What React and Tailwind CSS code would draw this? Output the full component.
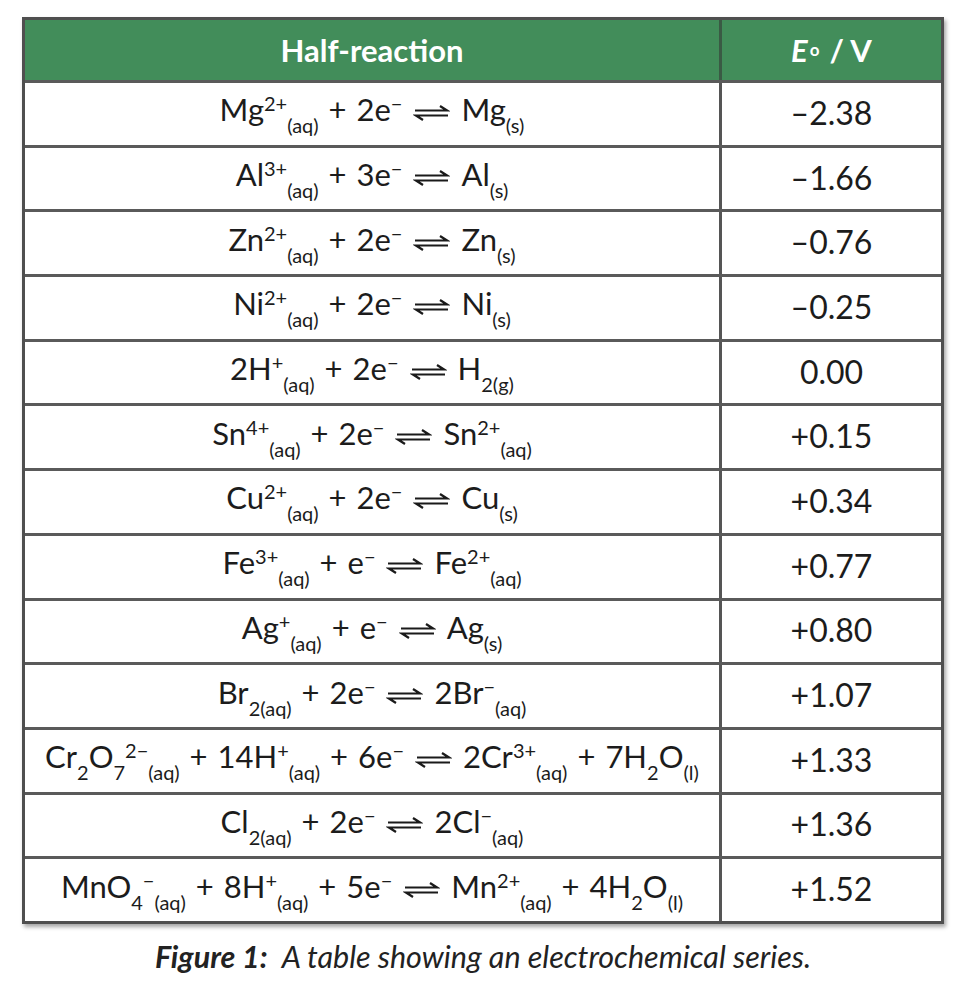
import React from "react";

const Sup = ({ children }) => (
  <span className="align-[10px] text-[20px] leading-none">{children}</span>
);
const Sub = ({ children }) => (
  <span className="align-[-12px] text-[20px] leading-none">{children}</span>
);
const Arrow = () => (
  <svg width="37" height="16" viewBox="0 0 37 16" className="mx-[11px] inline-block align-[0px]">
    <path d="M2 5.5 H34 L27 1" fill="none" stroke="#1a1a1a" strokeWidth="2.2" strokeLinejoin="miter" />
    <path d="M35 10.5 H3 L10 15" fill="none" stroke="#1a1a1a" strokeWidth="2.2" strokeLinejoin="miter" />
  </svg>
);
const P = () => <span className="mx-[10px]">+</span>;
const E = () => (
  <>
    e<Sup>−</Sup>
  </>
);

const rows = [
  [<>Mg<Sup>2+</Sup><Sub>(aq)</Sub><P />2<E /><Arrow />Mg<Sub>(s)</Sub></>, "–2.38"],
  [<>Al<Sup>3+</Sup><Sub>(aq)</Sub><P />3<E /><Arrow />Al<Sub>(s)</Sub></>, "–1.66"],
  [<>Zn<Sup>2+</Sup><Sub>(aq)</Sub><P />2<E /><Arrow />Zn<Sub>(s)</Sub></>, "–0.76"],
  [<>Ni<Sup>2+</Sup><Sub>(aq)</Sub><P />2<E /><Arrow />Ni<Sub>(s)</Sub></>, "–0.25"],
  [<>2H<Sup>+</Sup><Sub>(aq)</Sub><P />2<E /><Arrow />H<Sub>2(g)</Sub></>, "0.00"],
  [<>Sn<Sup>4+</Sup><Sub>(aq)</Sub><P />2<E /><Arrow />Sn<Sup>2+</Sup><Sub>(aq)</Sub></>, "+0.15"],
  [<>Cu<Sup>2+</Sup><Sub>(aq)</Sub><P />2<E /><Arrow />Cu<Sub>(s)</Sub></>, "+0.34"],
  [<>Fe<Sup>3+</Sup><Sub>(aq)</Sub><P />e<Sup>−</Sup><Arrow />Fe<Sup>2+</Sup><Sub>(aq)</Sub></>, "+0.77"],
  [<>Ag<Sup>+</Sup><Sub>(aq)</Sub><P />e<Sup>−</Sup><Arrow />Ag<Sub>(s)</Sub></>, "+0.80"],
  [<>Br<Sub>2(aq)</Sub><P />2<E /><Arrow />2Br<Sup>−</Sup><Sub>(aq)</Sub></>, "+1.07"],
  [<>Cr<Sub>2</Sub>O<Sub>7</Sub><Sup>2−</Sup><Sub>(aq)</Sub><P />14H<Sup>+</Sup><Sub>(aq)</Sub><P />6<E /><Arrow />2Cr<Sup>3+</Sup><Sub>(aq)</Sub><P />7H<Sub>2</Sub>O<Sub>(l)</Sub></>, "+1.33"],
  [<>Cl<Sub>2(aq)</Sub><P />2<E /><Arrow />2Cl<Sup>−</Sup><Sub>(aq)</Sub></>, "+1.36"],
  [<>MnO<Sub>4</Sub><Sup>−</Sup><Sub>(aq)</Sub><P />8H<Sup>+</Sup><Sub>(aq)</Sub><P />5<E /><Arrow />Mn<Sup>2+</Sup><Sub>(aq)</Sub><P />4H<Sub>2</Sub>O<Sub>(l)</Sub></>, "+1.52"],
];

export default function App() {
  return (
    <div className="w-[963px] h-[981px] bg-white pt-[17px] pl-[22px]" style={{ fontFamily: "Lato, 'Open Sans', sans-serif" }}>
      <div className="w-[922px] border-[3px] border-[#4f4f4f] shadow-[2px_3px_4px_rgba(0,0,0,0.35)] text-[#1c1c1c]">
        <div className="grid grid-cols-[697px_1fr] h-[60px] bg-[#428d5a] text-white font-bold text-[31px]">
          <div className="flex items-center justify-center border-r-[3px] border-[#3a5a44]">Half-reaction</div>
          <div className="flex items-center justify-center">
            <span className="italic">E</span>
            <span className="align-[9px] text-[17px] ml-[2px] mr-[10px]">o</span>
            <span>/ V</span>
          </div>
        </div>
        {rows.map(([r, v], i) => (
          <div key={i} className="grid grid-cols-[697px_1fr] h-[64.7px] border-t-[3px] border-[#5a5a5a]">
            <div className="flex items-center justify-center border-r-[3px] border-[#555] text-[31px] whitespace-nowrap pb-[6px]">
              <span>{r}</span>
            </div>
            <div className="flex items-center justify-center text-[32px] pb-[2px]">{v}</div>
          </div>
        ))}
      </div>
      <div className="w-[922px] text-center mt-[10px] text-[30.5px] italic text-[#222]">
        <span className="font-bold">Figure 1:</span>
        <span className="ml-[14px]">A table showing an electrochemical series.</span>
      </div>
    </div>
  );
}
